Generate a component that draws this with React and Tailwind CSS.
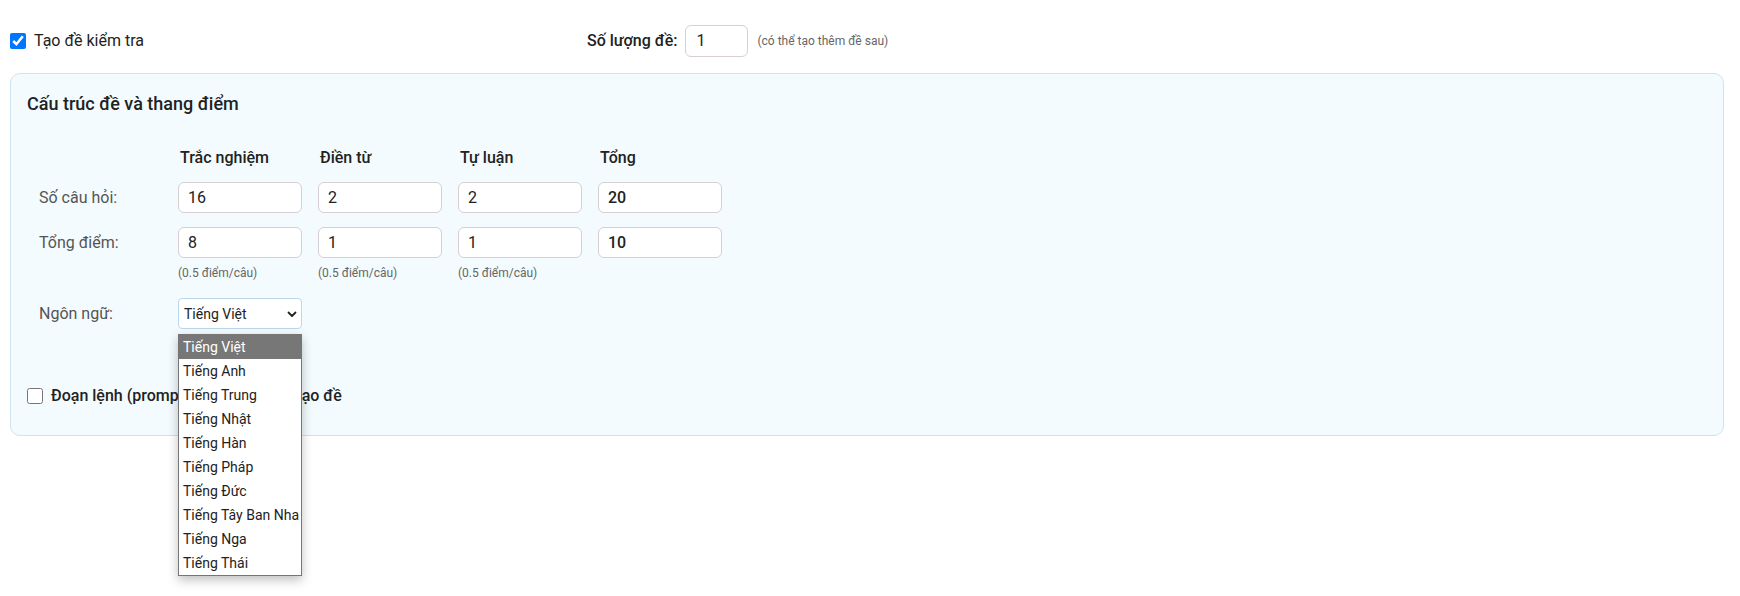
import React, { useState } from "react";

const languages = [
  "Tiếng Việt",
  "Tiếng Anh",
  "Tiếng Trung",
  "Tiếng Nhật",
  "Tiếng Hàn",
  "Tiếng Pháp",
  "Tiếng Đức",
  "Tiếng Tây Ban Nha",
  "Tiếng Nga",
  "Tiếng Thái",
];

const columns = ["Trắc nghiệm", "Điền từ", "Tự luận", "Tổng"];

function NumberBox({ value, bold }) {
  return (
    <input
      type="text"
      defaultValue={value}
      className={`h-[31px] w-[124px] rounded-md border border-[#d7cfd3] bg-white px-[9px] text-base text-[#222] outline-none ${
        bold ? "font-medium" : ""
      }`}
    />
  );
}

export default function App() {
  const [lang] = useState("Tiếng Việt");

  return (
    <div
      className="min-h-screen bg-white pl-[10px] pr-[16px] pt-[25px] text-[#222]"
      style={{ fontFamily: "Roboto, 'Noto Sans', sans-serif" }}
    >
      {/* Top row */}
      <div className="flex h-[31px] items-center">
        <label className="flex w-[577px] items-center gap-2 text-base">
          <input type="checkbox" defaultChecked className="h-4 w-4 m-0" />
          <span>Tạo đề kiểm tra</span>
        </label>
        <div className="flex items-center">
          <span className="text-base font-medium">Số lượng đề:</span>
          <input
            type="text"
            defaultValue="1"
            className="ml-2 h-[32px] w-[63px] rounded-md border border-[#d7cfd3] bg-white px-[10px] text-base outline-none"
          />
          <span className="ml-[9px] text-xs text-[#666]">
            (có thể tạo thêm đề sau)
          </span>
        </div>
      </div>

      {/* Card */}
      <div className="mt-[17px] rounded-[10px] border border-[#cfe3f1] bg-[#f3fbfe] px-4 pt-4 pb-[27px]">
        <h2 className="text-lg font-medium leading-[27px]">
          Cấu trúc đề và thang điểm
        </h2>

        {/* Header row */}
        <div className="mt-[29px] grid h-6 grid-cols-[135px_124px_124px_124px_124px] gap-x-4 items-center">
          <div></div>
          {columns.map((c) => (
            <div key={c} className="pl-[2px] text-base font-medium leading-6">
              {c}
            </div>
          ))}
        </div>

        {/* So cau hoi */}
        <div className="mt-3 grid grid-cols-[135px_124px_124px_124px_124px] gap-x-4 items-center">
          <div className="pl-[12px] text-base text-[#555]">Số câu hỏi:</div>
          <NumberBox value="16" />
          <NumberBox value="2" />
          <NumberBox value="2" />
          <NumberBox value="20" bold />
        </div>

        {/* Tong diem */}
        <div className="mt-[14px] grid grid-cols-[135px_124px_124px_124px_124px] gap-x-4 items-center">
          <div className="pl-[12px] text-base text-[#555]">Tổng điểm:</div>
          <NumberBox value="8" />
          <NumberBox value="1" />
          <NumberBox value="1" />
          <NumberBox value="10" bold />
        </div>

        <div className="mt-[7px] grid grid-cols-[135px_124px_124px_124px_124px] gap-x-4 text-xs leading-4 text-[#666]">
          <div></div>
          <div>(0.5 điểm/câu)</div>
          <div>(0.5 điểm/câu)</div>
          <div>(0.5 điểm/câu)</div>
        </div>

        {/* Ngon ngu */}
        <div className="mt-[17px] grid grid-cols-[135px_124px] gap-x-4 items-center">
          <div className="pl-[12px] text-base text-[#555]">Ngôn ngữ:</div>
          <div className="relative h-[31px] w-[124px]">
            <div className="flex h-full w-full items-center justify-between rounded-[4px] border border-[#bcd6ec] bg-white pl-[5px] pr-[4px] text-sm text-[#222]">
              <span>{lang}</span>
              <svg width="10" height="10" viewBox="0 0 10 10" fill="none">
                <path
                  d="M1.5 3.5 L5 7 L8.5 3.5"
                  stroke="#222"
                  strokeWidth="1.8"
                  strokeLinecap="round"
                  strokeLinejoin="round"
                />
              </svg>
            </div>

            {/* Open list */}
            <ul className="absolute left-0 top-[36px] z-10 w-[124px] border border-[#767676] bg-white shadow-[0_4px_10px_rgba(0,0,0,0.25)]">
              {languages.map((l) => (
                <li
                  key={l}
                  className={`h-6 whitespace-nowrap pl-[4px] text-sm leading-6 ${
                    l === lang ? "bg-[#777] text-white" : "text-[#222]"
                  }`}
                >
                  {l}
                </li>
              ))}
            </ul>
          </div>
        </div>

        {/* Prompt checkbox */}
        <label className="mt-[55px] flex h-6 items-center gap-2 text-base font-medium">
          <input type="checkbox" className="h-4 w-4 m-0" />
          <span>Đoạn lệnh (prompt) để hướng dẫn tạo đề</span>
        </label>
      </div>
    </div>
  );
}
